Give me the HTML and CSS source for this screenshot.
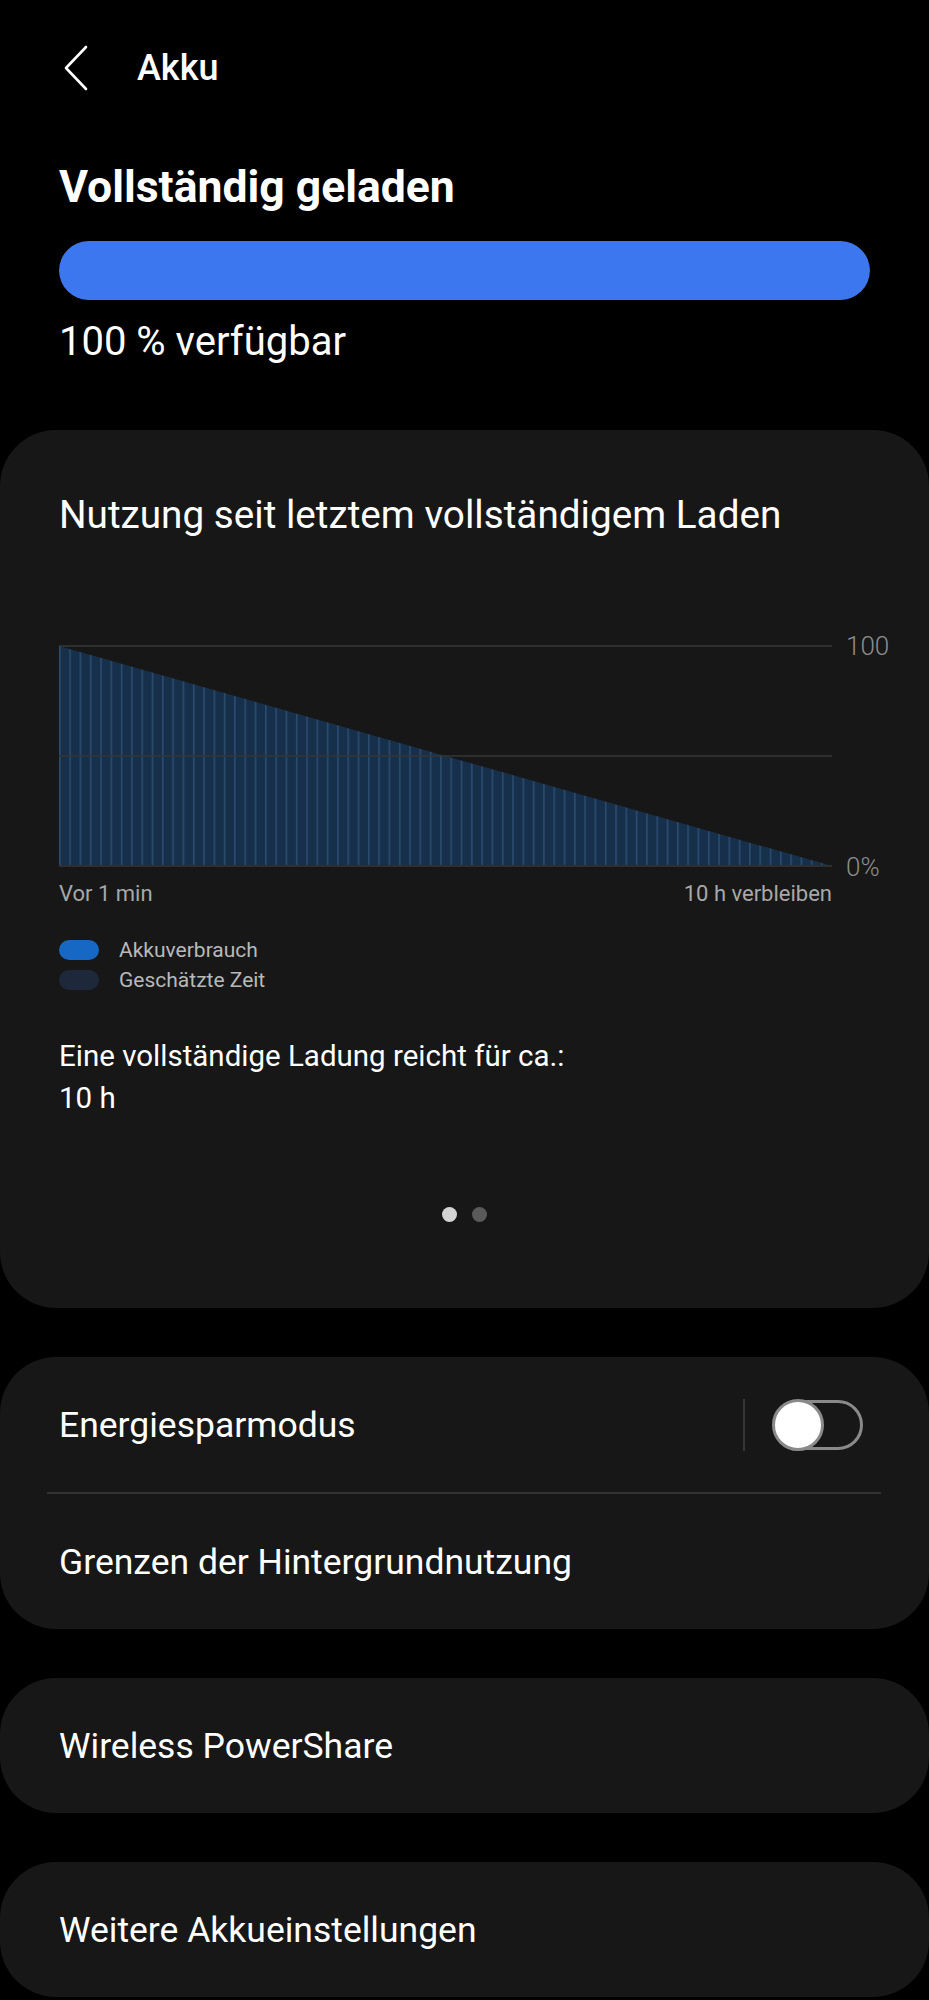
FILE: index.html
```html
<!DOCTYPE html>
<html lang="de">
<head>
    <meta charset="UTF-8">
    <meta name="viewport" content="width=device-width, initial-scale=1.0">
    <title>Akku</title>
    <link rel="stylesheet" href="styles.css">
</head>
<body>
    <header class="topbar">
        <svg class="back" width="24" height="46" viewBox="0 0 24 46">
            <path d="M22 2 L2 23 L22 44" fill="none" stroke="#fff" stroke-width="2.6" stroke-linecap="round" stroke-linejoin="round"/>
        </svg>
        <span class="topbar-title">Akku</span>
    </header>

    <section class="status">
        <h1>Vollständig geladen</h1>
        <div class="level"><div class="level-fill" style="width: 100%"></div></div>
        <p class="available">100 % verfügbar</p>
    </section>

    <section class="card usage">
        <h2>Nutzung seit letztem vollständigem Laden</h2>

        <div class="chart">
            <svg class="chart-plot" width="773" height="222" viewBox="0 0 773 222">
                <defs>
                    <pattern id="stripes" width="10.3" height="222" patternUnits="userSpaceOnUse">
                        <rect width="10.3" height="222" fill="#16304c"/>
                        <rect x="0" width="1.6" height="222" fill="#2b4b6d"/>
                    </pattern>
                </defs>
                <line x1="0" y1="1" x2="773" y2="1" stroke="#2f2f2f" stroke-width="2"/>
                <polygon points="0,1 773,221 0,221" fill="url(#stripes)"/>
                <line x1="0" y1="111" x2="773" y2="111" stroke="#343434" stroke-width="2" opacity="0.8"/>
                <line x1="0" y1="221" x2="773" y2="221" stroke="#2f2f2f" stroke-width="2"/>
            </svg>
            <div class="chart-axis">
                <span>100</span>
                <span>0%</span>
            </div>
        </div>
        <div class="chart-time">
            <span>Vor 1 min</span>
            <span>10 h verbleiben</span>
        </div>

        <ul class="legend">
            <li><span class="swatch used"></span>Akkuverbrauch</li>
            <li><span class="swatch estimated"></span>Geschätzte Zeit</li>
        </ul>

        <p class="estimate">Eine vollständige Ladung reicht für ca.:<br>10 h</p>

        <div class="pager">
            <span class="dot active"></span>
            <span class="dot"></span>
        </div>
    </section>

    <section class="card">
        <div class="row">
            <span>Energiesparmodus</span>
            <div class="switch-wrap">
                <span class="split"></span>
                <span class="switch"><span class="knob"></span></span>
            </div>
        </div>
        <div class="divider"></div>
        <div class="row">
            <span>Grenzen der Hintergrundnutzung</span>
        </div>
    </section>

    <section class="card">
        <div class="row">
            <span>Wireless PowerShare</span>
        </div>
    </section>

    <section class="card">
        <div class="row">
            <span>Weitere Akkueinstellungen</span>
        </div>
    </section>
</body>
</html>
```

FILE: styles.css
```css
body {
    margin: 0;
    background-color: #000;
    color: #fff;
    font-family: Roboto, "Noto Sans", sans-serif;
}
.topbar {
    display: flex;
    align-items: center;
    height: 46px;
    padding: 45px 0 0 64px;
}
.back {
    display: block;
}
.topbar-title {
    margin-left: 49px;
    font-size: 36px;
    font-weight: 500;
    line-height: 46px;
}
.status {
    padding: 70px 59px 0 59px;
}
.status h1 {
    margin: 0;
    font-size: 44.5px;
    font-weight: 700;
    line-height: 52px;
}
.level {
    height: 59px;
    margin-top: 28px;
    background: #2a2a2a;
    border-radius: 30px;
    overflow: hidden;
}
.level-fill {
    height: 100%;
    background: #3d77f0;
    border-radius: 30px;
}
.available {
    margin: 19px 0 0 0;
    font-size: 40px;
    line-height: 46px;
}
.card {
    background: #171717;
    border-radius: 56px;
    margin-top: 49px;
}
.usage {
    margin-top: 65px;
    padding: 62px 0 0 59px;
    height: 816px;
}
.usage h2 {
    margin: 0;
    font-size: 38.7px;
    font-weight: 400;
    line-height: 46px;
}
.chart {
    display: flex;
    margin-top: 107px;
}
.chart-plot {
    display: block;
}
.chart-axis {
    display: flex;
    flex-direction: column;
    justify-content: space-between;
    margin: -12px 0 -13px 14px;
    font-size: 26px;
    font-weight: 300;
    line-height: 26px;
    color: #8d8d8d;
}
.chart-time {
    display: flex;
    justify-content: space-between;
    width: 773px;
    margin-top: 13px;
    font-size: 22px;
    line-height: 28px;
    color: #a8a8a8;
}
.legend {
    list-style: none;
    margin: 27px 0 0 0;
    padding: 0;
    font-size: 21px;
    line-height: 30px;
    color: #b9b9b9;
}
.legend li {
    display: flex;
    align-items: center;
}
.swatch {
    width: 40px;
    height: 20px;
    border-radius: 10px;
    margin-right: 20px;
}
.swatch.used {
    background: #1767c4;
}
.swatch.estimated {
    background: #1d283a;
}
.estimate {
    margin: 40px 0 0 0;
    font-size: 29.5px;
    line-height: 42px;
}
.pager {
    display: flex;
    justify-content: center;
    gap: 15px;
    margin: 88px 59px 0 0;
}
.dot {
    width: 15px;
    height: 15px;
    border-radius: 50%;
    background: #5a5a5a;
}
.dot.active {
    background: #d4d4d4;
}
.row {
    display: flex;
    align-items: center;
    justify-content: space-between;
    height: 135px;
    padding: 0 66px 0 59px;
    font-size: 35.5px;
}
.divider {
    height: 2px;
    margin: 0 48px 0 47px;
    background: #333;
}
.switch-wrap {
    display: flex;
    align-items: center;
}
.split {
    width: 2px;
    height: 52px;
    margin-right: 28px;
    background: #363636;
}
.switch {
    display: flex;
    width: 90px;
    height: 50px;
    box-sizing: border-box;
    border: 3px solid #8a8a8a;
    border-radius: 25px;
    align-items: center;
}
.knob {
    width: 52px;
    height: 52px;
    margin-left: -4px;
    box-sizing: border-box;
    border-radius: 50%;
    background: #fff;
    border: 3px solid #8a8a8a;
}
```
